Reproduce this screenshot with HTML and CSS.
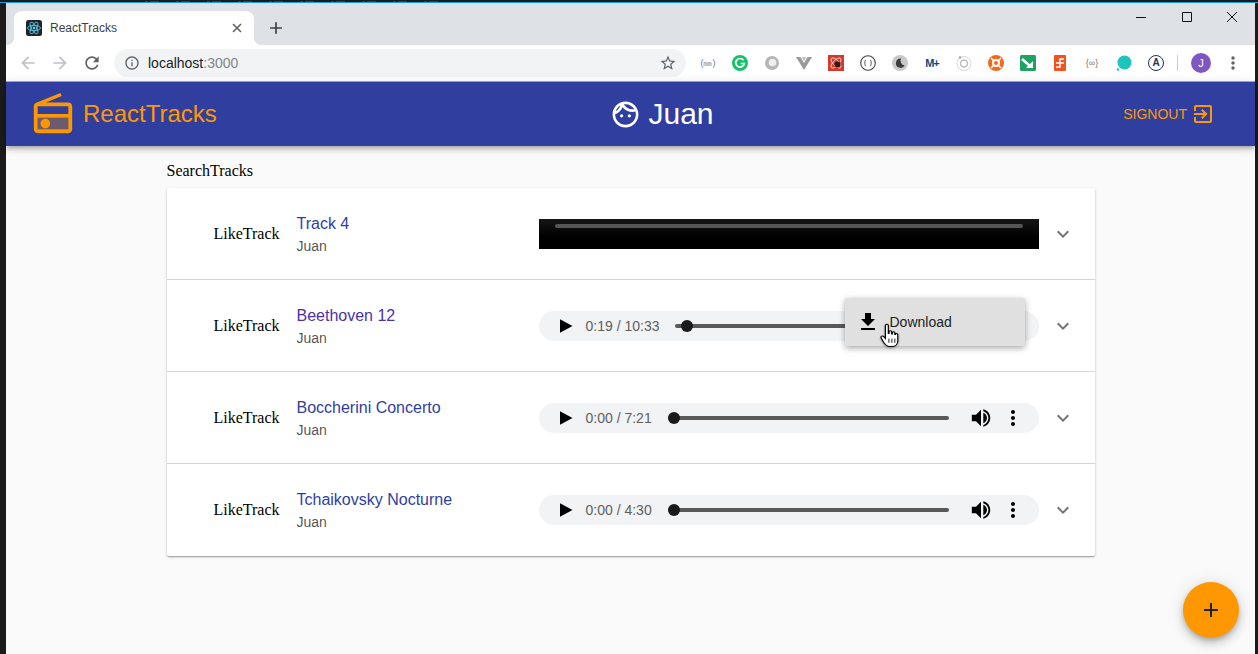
FILE: index.html
```html
<!DOCTYPE html>
<html lang="en">
<head>
    <meta charset="utf-8">
    <title>ReactTracks</title>
    <link rel="stylesheet" href="styles.css">
</head>
<body>
<svg class="sprites" width="0" height="0">
    <symbol id="i-back" viewBox="0 0 24 24"><path d="M20 11H7.83l5.59-5.59L12 4l-8 8 8 8 1.41-1.41L7.83 13H20v-2z"/></symbol>
    <symbol id="i-forward" viewBox="0 0 24 24"><path d="M12 4l-1.41 1.41L16.17 11H4v2h12.17l-5.58 5.59L12 20l8-8z"/></symbol>
    <symbol id="i-reload" viewBox="0 0 24 24"><path d="M17.65 6.35C16.2 4.9 14.21 4 12 4c-4.42 0-7.99 3.58-7.99 8s3.57 8 7.99 8c3.73 0 6.84-2.55 7.73-6h-2.08c-.82 2.33-3.04 4-5.65 4-3.31 0-6-2.69-6-6s2.69-6 6-6c1.66 0 3.14.69 4.22 1.78L13 11h7V4l-2.35 2.35z"/></symbol>
    <symbol id="i-info" viewBox="0 0 24 24"><path d="M11 7h2v2h-2zm0 4h2v6h-2zm1-9C6.48 2 2 6.48 2 12s4.48 10 10 10 10-4.48 10-10S17.52 2 12 2zm0 18c-4.41 0-8-3.59-8-8s3.59-8 8-8 8 3.59 8 8-3.59 8-8 8z"/></symbol>
    <symbol id="i-star" viewBox="0 0 24 24"><path d="M22 9.24l-7.19-.62L12 2 9.19 8.63 2 9.24l5.46 4.73L5.82 21 12 17.27 18.18 21l-1.63-7.03L22 9.24zM12 15.4l-3.76 2.27 1-4.28-3.32-2.88 4.38-.38L12 6.1l1.71 4.04 4.38.38-3.32 2.88 1 4.28L12 15.4z"/></symbol>
    <symbol id="i-more" viewBox="0 0 24 24"><path d="M12 8c1.1 0 2-.9 2-2s-.9-2-2-2-2 .9-2 2 .9 2 2 2zm0 2c-1.1 0-2 .9-2 2s.9 2 2 2 2-.9 2-2-.9-2-2-2zm0 6c-1.1 0-2 .9-2 2s.9 2 2 2 2-.9 2-2-.9-2-2-2z"/></symbol>
    <symbol id="i-add" viewBox="0 0 24 24"><path d="M19 13h-6v6h-2v-6H5v-2h6V5h2v6h6v2z"/></symbol>
    <symbol id="i-expand" viewBox="0 0 24 24"><path d="M16.59 8.59L12 13.17 7.41 8.59 6 10l6 6 6-6z"/></symbol>
    <symbol id="i-play" viewBox="0 0 24 24"><path d="M6 4l15 8-15 8z"/></symbol>
    <symbol id="i-volume" viewBox="0 0 24 24"><path d="M2 8.500v7h4.500l5.500 5.500V3L6.500 8.500H2zm12.500-2.200v11.400c2.300-.9 4-3.200 4-5.700s-1.700-4.800-4-5.700zm0-3.800v2c3.300 1 5.600 3.900 5.600 7.500s-2.300 6.500-5.600 7.500v2c4.400-1 7.600-4.900 7.600-9.500S18.900 3.500 14.500 2.500z"/></symbol>
</svg>

<div class="top-strip"></div>

<div class="window">
    <div class="tabstrip">
        <div class="tab">
            <svg class="favicon" viewBox="0 0 16 16">
                <rect width="16" height="16" rx="2.500" fill="#20232a"/>
                <g fill="none" stroke="#61dafb" stroke-width="0.8">
                    <ellipse cx="8" cy="8" rx="6.500" ry="2.600"/>
                    <ellipse cx="8" cy="8" rx="6.500" ry="2.600" transform="rotate(60 8 8)"/>
                    <ellipse cx="8" cy="8" rx="6.500" ry="2.600" transform="rotate(120 8 8)"/>
                </g>
                <circle cx="8" cy="8" r="1.300" fill="#61dafb"/>
            </svg>
            <span class="tab-title">ReactTracks</span>
            <svg class="tab-close" viewBox="0 0 10 10"><path d="M1 1l8 8M9 1l-8 8"/></svg>
        </div>
        <svg class="new-tab"><use href="#i-add"/></svg>
        <div class="window-controls">
            <svg viewBox="0 0 12 12"><path d="M1 6.500h10"/></svg>
            <svg viewBox="0 0 12 12"><path d="M1.500 1.500h9v9h-9z"/></svg>
            <svg viewBox="0 0 12 12"><path d="M1 1l10 10M11 1L1 11"/></svg>
        </div>
    </div>

    <div class="toolbar">
        <svg class="nav-icon muted"><use href="#i-back"/></svg>
        <svg class="nav-icon muted"><use href="#i-forward"/></svg>
        <svg class="nav-icon"><use href="#i-reload"/></svg>
        <div class="omnibox">
            <svg class="omni-info"><use href="#i-info"/></svg>
            <span class="url">localhost<span class="url-port">:3000</span></span>
            <svg class="omni-star"><use href="#i-star"/></svg>
        </div>
        <div class="extensions">
            <span class="ext ext-text">(㎜)</span>
            <svg class="ext" viewBox="0 0 16 16"><circle cx="8" cy="8" r="8" fill="#15c26b"/><path d="M11.500 5.200A4.300 4.300 0 1 0 12.300 8.500H8.800" fill="none" stroke="#fff" stroke-width="1.700"/></svg>
            <svg class="ext" viewBox="0 0 16 16"><circle cx="8" cy="8" r="7" fill="#b5b5b5"/><circle cx="8.500" cy="7.500" r="3.800" fill="#efefef"/></svg>
            <svg class="ext" viewBox="0 0 16 16"><path d="M0 2h4.500L8 8l3.500-6H16L8 15z" fill="#9a9a9a"/><path d="M5.500 2h5L8 6.500z" fill="#c4c4c4"/></svg>
            <svg class="ext" viewBox="0 0 16 16"><rect width="16" height="16" fill="#d5392b"/><g fill="none" stroke="#f7dcd8" stroke-width=".9"><ellipse cx="8" cy="8" rx="6.500" ry="2.800" transform="rotate(45 8 8)"/><ellipse cx="8" cy="8" rx="6.500" ry="2.800" transform="rotate(135 8 8)"/></g><circle cx="9.500" cy="9.500" r="3" fill="#2b1a18"/></svg>
            <svg class="ext" viewBox="0 0 16 16"><circle cx="8" cy="8" r="7.300" fill="#fff" stroke="#444" stroke-width="1.100"/><path d="M6 5c-1 0-1 1-1 2s-.6 1-.6 1 .6 0 .6 1 0 2 1 2M10 5c1 0 1 1 1 2s.6 1 .6 1-.6 0-.6 1 0 2-1 2" fill="none" stroke="#444" stroke-width=".9"/></svg>
            <svg class="ext" viewBox="0 0 16 16"><circle cx="8" cy="8" r="8" fill="#c9c9c9"/><path d="M9 3.500a4.700 4.700 0 1 0 3.700 7A5 5 0 0 1 9 3.500z" fill="#3c3c3c"/></svg>
            <span class="ext ext-movistar">M+</span>
            <svg class="ext" viewBox="0 0 16 16"><circle cx="8" cy="8.500" r="7" fill="#fff" stroke="#d6d6d6"/><circle cx="8" cy="8.500" r="3.500" fill="none" stroke="#bdbdbd" stroke-width="1.500"/><circle cx="4" cy="2.500" r="1.300" fill="#a8a8a8"/></svg>
            <svg class="ext" viewBox="0 0 16 16"><circle cx="8" cy="8" r="8" fill="#f26a21"/><circle cx="8" cy="8" r="3" fill="none" stroke="#fff" stroke-width="2"/><path d="M3 3l3 3M13 3l-3 3M3 13l3-3M13 13l-3-3" stroke="#fff" stroke-width="1.500"/></svg>
            <svg class="ext" viewBox="0 0 16 16"><rect width="16" height="16" rx="1.500" fill="#1ea362"/><path d="M2 4l8 7" stroke="#fff" stroke-width="2.600"/><path d="M13 6v7H6z" fill="#fff"/></svg>
            <svg class="ext" viewBox="0 0 16 16"><rect x="2" width="12" height="16" rx="1" fill="#f4511e"/><path d="M12 4H8v4H4M12 8H8v4H4" fill="none" stroke="#fff" stroke-width="1.500"/></svg>
            <span class="ext ext-text">{∞}</span>
            <svg class="ext" viewBox="0 0 16 16"><circle cx="8.500" cy="7.500" r="7" fill="#1fc4bd"/><circle cx="2" cy="14.500" r="1.300" fill="#1fc4bd"/></svg>
            <span class="ext ext-a">A</span>
            <span class="ext-sep"></span>
            <span class="avatar">J</span>
            <svg class="chrome-menu"><use href="#i-more"/></svg>
        </div>
    </div>

    <div class="page">
        <header class="appbar">
            <div class="brand">
                <svg class="brand-icon" viewBox="0 0 24 24">
                    <path class="tone" d="M4 14h16v6H4z"/>
                    <path d="M3.240 6.150C2.510 6.430 2 7.170 2 8v12c0 1.100.890 2 2 2h16c1.110 0 2-.9 2-2V8c0-1.110-.89-2-2-2H8.300l8.260-3.340L15.880 1 3.240 6.150zM4 8h16v4H4V8zm0 12v-6h16v6H4z"/>
                    <circle cx="8" cy="17" r="2.500"/>
                </svg>
                <span class="brand-name">ReactTracks</span>
            </div>
            <div class="user">
                <svg class="user-icon" viewBox="0 0 24 24"><path d="M10.250 13c0 .69-.56 1.250-1.250 1.250S7.750 13.690 7.750 13s.56-1.250 1.250-1.250 1.250.56 1.250 1.250zM15 11.750c-.69 0-1.250.56-1.250 1.250s.56 1.250 1.250 1.250 1.250-.56 1.250-1.250-.56-1.250-1.250-1.250zm7 .25c0 5.520-4.480 10-10 10S2 17.520 2 12 6.480 2 12 2s10 4.480 10 10zM10.660 4.120C12.060 6.440 14.600 8 17.500 8c.46 0 .91-.05 1.340-.12C17.440 5.560 14.900 4 12 4c-.46 0-.91.05-1.340.12zM4.420 9.470c1.710-.97 3.030-2.550 3.660-4.440C6.370 6 5.050 7.580 4.420 9.470zM20 12c0-.78-.12-1.530-.33-2.240-.7.15-1.420.24-2.170.24-3.130 0-5.920-1.440-7.760-3.690C8.690 8.870 6.600 10.880 4 11.860c.01.04 0 .09 0 .14 0 4.410 3.590 8 8 8s8-3.590 8-8z"/></svg>
                <span class="user-name">Juan</span>
            </div>
            <button class="signout">
                <span>Signout</span>
                <svg viewBox="0 0 24 24"><path d="M10.090 15.590L11.500 17l5-5-5-5-1.410 1.410L12.670 11H3v2h9.670l-2.580 2.590zM19 3H5c-1.110 0-2 .9-2 2v4h2V5h14v14H5v-4H3v4c0 1.100.89 2 2 2h14c1.100 0 2-.9 2-2V5c0-1.100-.9-2-2-2z"/></svg>
            </button>
        </header>

        <main class="content">
            <div class="search-label">SearchTracks</div>
            <section class="track-list">
                <div class="track">
                    <div class="like">LikeTrack</div>
                    <div class="track-text">
                        <div class="track-title">Track 4</div>
                        <div class="track-author">Juan</div>
                    </div>
                    <div class="player-loading"><div class="loading-bar"></div></div>
                    <svg class="expand"><use href="#i-expand"/></svg>
                </div>
                <div class="track">
                    <div class="like">LikeTrack</div>
                    <div class="track-text">
                        <div class="track-title visited">Beethoven 12</div>
                        <div class="track-author">Juan</div>
                    </div>
                    <div class="player">
                        <svg class="play"><use href="#i-play"/></svg>
                        <span class="time">0:19 / 10:33</span>
                        <div class="progress"><span class="thumb" style="left: 6px"></span></div>
                        <svg class="volume"><use href="#i-volume"/></svg>
                        <svg class="dots"><use href="#i-more"/></svg>
                        <div class="download-menu">
                            <svg viewBox="0 0 24 24"><path d="M19 9h-4V3H9v6H5l7 7 7-7zM5 18v2h14v-2H5z"/></svg>
                            <span>Download</span>
                            <svg class="hand" viewBox="0 0 16 24" preserveAspectRatio="none"><path d="M4.500 2.500c0-1.800 2.500-1.800 2.500 0V10h.6V8.500c0-1.500 2.200-1.500 2.200 0V10.500h.6V9.500c0-1.400 2.100-1.400 2.100 0v1.500h.5c0-1.200 2-1.200 2 .2V17c0 3-1.700 5.500-5 5.500H8c-2.500 0-3.500-1.500-5-4L1 14.500c-.8-1.800 1.200-2.800 2.200-1.400l1.300 1.700z" fill="#fff" stroke="#000" stroke-width="1"/><path d="M7.500 15v4M10 15v4M12.500 15v4" stroke="#000" stroke-width=".8"/></svg>
                        </div>
                    </div>
                    <svg class="expand"><use href="#i-expand"/></svg>
                </div>
                <div class="track">
                    <div class="like">LikeTrack</div>
                    <div class="track-text">
                        <div class="track-title">Boccherini Concerto</div>
                        <div class="track-author">Juan</div>
                    </div>
                    <div class="player">
                        <svg class="play"><use href="#i-play"/></svg>
                        <span class="time">0:00 / 7:21</span>
                        <div class="progress"><span class="thumb" style="left: 0"></span></div>
                        <svg class="volume"><use href="#i-volume"/></svg>
                        <svg class="dots"><use href="#i-more"/></svg>
                    </div>
                    <svg class="expand"><use href="#i-expand"/></svg>
                </div>
                <div class="track">
                    <div class="like">LikeTrack</div>
                    <div class="track-text">
                        <div class="track-title">Tchaikovsky Nocturne</div>
                        <div class="track-author">Juan</div>
                    </div>
                    <div class="player">
                        <svg class="play"><use href="#i-play"/></svg>
                        <span class="time">0:00 / 4:30</span>
                        <div class="progress"><span class="thumb" style="left: 0"></span></div>
                        <svg class="volume"><use href="#i-volume"/></svg>
                        <svg class="dots"><use href="#i-more"/></svg>
                    </div>
                    <svg class="expand"><use href="#i-expand"/></svg>
                </div>
            </section>
        </main>

        <button class="fab"><svg><use href="#i-add"/></svg></button>
    </div>
</div>
</body>
</html>
```

FILE: styles.css
```css
html, body {
    height: 654px;
    margin: 0;
    overflow: hidden;
}

body {
    background-color: #1b1b1b;
    font-family: "Liberation Sans", Arial, sans-serif;
    display: flex;
    flex-direction: column;
}

.sprites {
    position: absolute;
}

.top-strip {
    height: 2px;
    flex: none;
    border-bottom: 1px solid #1a9be8;
    background: repeating-linear-gradient(90deg, #1d4766 0 3px, transparent 3px 5px, #1d4766 5px 14px, transparent 14px 31px) no-repeat 145px 1px / 310px 1px;
}

.window {
    flex: 1;
    margin: 0 3px 0 6px;
    display: flex;
    flex-direction: column;
    min-height: 0;
}

/* browser chrome */

.tabstrip {
    height: 42px;
    flex: none;
    background-color: #dee1e6;
    display: flex;
    align-items: flex-end;
    padding-left: 8px;
    position: relative;
}

.tab {
    width: 240px;
    height: 34px;
    background-color: #fff;
    border-radius: 8px 8px 0 0;
    display: flex;
    align-items: center;
    padding: 0 12px;
    box-sizing: border-box;
    position: relative;
}

.tab::before,
.tab::after {
    content: "";
    position: absolute;
    bottom: 0;
    width: 8px;
    height: 8px;
}

.tab::before {
    left: -8px;
    background: radial-gradient(circle at 0 0, #dee1e6 8px, #fff 8.500px);
}

.tab::after {
    right: -8px;
    background: radial-gradient(circle at 100% 0, #dee1e6 8px, #fff 8.500px);
}

.favicon {
    width: 16px;
    height: 16px;
    flex: none;
}

.tab-title {
    flex: 1;
    margin-left: 8px;
    font-size: 12px;
    color: #3c4043;
}

.tab-close {
    width: 10px;
    height: 10px;
    fill: none;
    stroke: #5f6368;
    stroke-width: 1.600;
}

.new-tab {
    width: 20px;
    height: 20px;
    margin: 0 0 7px 12px;
    fill: #3c4043;
}

.window-controls {
    margin-left: auto;
    align-self: flex-start;
    display: flex;
    gap: 33.500px;
    padding: 8px 17px 0 0;
}

.window-controls svg {
    width: 12px;
    height: 12px;
    fill: none;
    stroke: #111;
    stroke-width: 1;
}

.toolbar {
    height: 36px;
    flex: none;
    background-color: #fff;
    border-bottom: 1px solid #a9aec4;
    box-sizing: content-box;
    display: flex;
    align-items: center;
    padding-left: 6px;
}

.nav-icon {
    width: 20px;
    height: 20px;
    margin: 0 6px;
    fill: #5f6368;
}

.nav-icon.muted {
    fill: #bdc1c6;
}

.omnibox {
    width: 572px;
    height: 28px;
    margin-left: 6px;
    background-color: #f1f3f4;
    border-radius: 14px;
    display: flex;
    align-items: center;
    padding: 0 9px 0 10px;
    box-sizing: border-box;
}

.omni-info {
    width: 16px;
    height: 16px;
    fill: #5f6368;
}

.url {
    flex: 1;
    margin-left: 8px;
    font-size: 14px;
    color: #202124;
}

.url-port {
    color: #80868b;
}

.omni-star {
    width: 18px;
    height: 18px;
    fill: #5f6368;
}

.extensions {
    flex: 1;
    display: flex;
    align-items: center;
    padding-left: 6px;
}

.ext {
    width: 16px;
    height: 16px;
    margin: 0 8px;
    flex: none;
    display: block;
    text-align: center;
    overflow: visible;
}

.ext-text {
    font-size: 9px;
    line-height: 16px;
    color: #777;
    white-space: nowrap;
}

.ext-movistar {
    font-size: 11px;
    font-weight: bold;
    line-height: 16px;
    letter-spacing: -1px;
    color: #0b4a7c;
}

.ext-a {
    box-sizing: border-box;
    border: 1px solid #1d3557;
    border-radius: 50%;
    font-size: 10px;
    font-weight: bold;
    line-height: 14px;
    color: #1d3557;
}

.ext-sep {
    width: 1px;
    height: 16px;
    margin-left: 5px;
    background-color: #ccc;
}

.avatar {
    width: 20px;
    height: 20px;
    margin-left: 13px;
    border-radius: 50%;
    background-color: #7e57c2;
    color: #fff;
    font-size: 11px;
    line-height: 20px;
    text-align: center;
}

.chrome-menu {
    width: 20px;
    height: 20px;
    margin-left: 12px;
    fill: #5f6368;
}

/* app */

.page {
    flex: 1;
    min-height: 0;
    background-color: #fafafa;
    position: relative;
}

.appbar {
    height: 64px;
    background-color: #303f9f;
    display: flex;
    align-items: center;
    justify-content: space-between;
    padding: 0 40px 0 24px;
    box-shadow: 0 2px 4px -1px rgba(0, 0, 0, 0.2), 0 4px 5px rgba(0, 0, 0, 0.14), 0 1px 10px rgba(0, 0, 0, 0.12);
    position: relative;
}

.brand {
    display: flex;
    align-items: center;
    color: #ff9800;
}

.brand-icon {
    width: 46px;
    height: 46px;
    fill: #ff9800;
}

.brand-icon .tone {
    opacity: 0.3;
}

.brand-name {
    margin-left: 7px;
    font-size: 24px;
}

.user {
    display: flex;
    align-items: center;
    margin-right: 16px;
    color: #fff;
}

.user-icon {
    width: 31px;
    height: 31px;
    fill: #fff;
}

.user-name {
    margin-left: 7px;
    font-size: 30px;
}

.signout {
    display: flex;
    align-items: center;
    gap: 4px;
    padding: 0;
    border: none;
    background: none;
    color: #ff9800;
    font-family: inherit;
    font-size: 14px;
    text-transform: uppercase;
}

.signout svg {
    width: 24px;
    height: 24px;
    fill: #ff9800;
}

.content {
    width: 928px;
    margin: 0 auto;
}

.search-label {
    height: 42px;
    padding-top: 16px;
    box-sizing: border-box;
    font-family: "Liberation Serif", "Times New Roman", serif;
    font-size: 16px;
    color: #000;
}

.track-list {
    background-color: #fff;
    border-radius: 2px;
    box-shadow: 0 1px 3px rgba(0, 0, 0, 0.2), 0 1px 1px rgba(0, 0, 0, 0.14), 0 2px 1px -1px rgba(0, 0, 0, 0.12);
}

.track {
    height: 92px;
    box-sizing: border-box;
    border-bottom: 1px solid #d5d5d5;
    display: flex;
    align-items: center;
    padding: 0 20px 0 47px;
}

.track:last-child {
    border-bottom: none;
}

.like {
    width: 83px;
    flex: none;
    font-family: "Liberation Serif", "Times New Roman", serif;
    font-size: 16px;
    color: #000;
}

.track-text {
    flex: 1;
}

.track-title {
    font-size: 16px;
    line-height: 24px;
    color: #303f9f;
}

.track-title.visited {
    color: #4b32a8;
}

.track-author {
    font-size: 14px;
    line-height: 20px;
    color: rgba(0, 0, 0, 0.7);
}

.player-loading {
    width: 500px;
    height: 30px;
    flex: none;
    background: linear-gradient(#151515, #000 60%);
    padding: 5px 16px 0;
    box-sizing: border-box;
}

.loading-bar {
    height: 4px;
    border-radius: 2px;
    background-color: #555;
}

.player {
    width: 500px;
    height: 30px;
    flex: none;
    background-color: #f1f3f4;
    border-radius: 15px;
    display: flex;
    align-items: center;
    padding-left: 16px;
    box-sizing: border-box;
    position: relative;
}

.play {
    width: 20px;
    height: 20px;
    flex: none;
    fill: #000;
}

.time {
    margin-left: 11px;
    font-size: 14px;
    color: #5f5f5f;
    white-space: nowrap;
}

.progress {
    flex: 1;
    height: 4px;
    margin-left: 16px;
    border-radius: 2px;
    background-color: #595959;
    position: relative;
}

.thumb {
    position: absolute;
    top: -4px;
    width: 12px;
    height: 12px;
    border-radius: 50%;
    background-color: #1a1a1a;
}

.volume {
    width: 22px;
    height: 22px;
    flex: none;
    margin-left: 21px;
    fill: #000;
}

.dots {
    width: 24px;
    height: 24px;
    flex: none;
    margin: 0 14px 0 9px;
    fill: #000;
}

.download-menu {
    position: absolute;
    top: -13px;
    left: 306px;
    width: 180px;
    height: 48px;
    background-color: #e0e0e0;
    border-radius: 2px;
    box-shadow: 0 2px 6px rgba(0, 0, 0, 0.35);
    display: flex;
    align-items: center;
    padding-left: 11px;
    box-sizing: border-box;
    font-size: 14px;
    color: #222;
}

.download-menu svg {
    width: 24px;
    height: 24px;
    flex: none;
    fill: #000;
}

.download-menu span {
    margin-left: 10px;
}

.download-menu .hand {
    position: absolute;
    left: 35px;
    top: 25px;
    width: 19px;
    height: 25px;
    filter: drop-shadow(0 1px 1px rgba(0, 0, 0, 0.35));
}

.expand {
    width: 24px;
    height: 24px;
    flex: none;
    margin-left: 12px;
    fill: #757575;
}

.fab {
    position: absolute;
    right: 16px;
    bottom: 16px;
    width: 56px;
    height: 56px;
    padding: 16px;
    border: none;
    border-radius: 50%;
    background-color: #ff9800;
    box-shadow: 0 3px 5px -1px rgba(0, 0, 0, 0.2), 0 6px 10px rgba(0, 0, 0, 0.14), 0 1px 18px rgba(0, 0, 0, 0.12);
}

.fab svg {
    display: block;
    width: 24px;
    height: 24px;
    fill: #222;
}
```
